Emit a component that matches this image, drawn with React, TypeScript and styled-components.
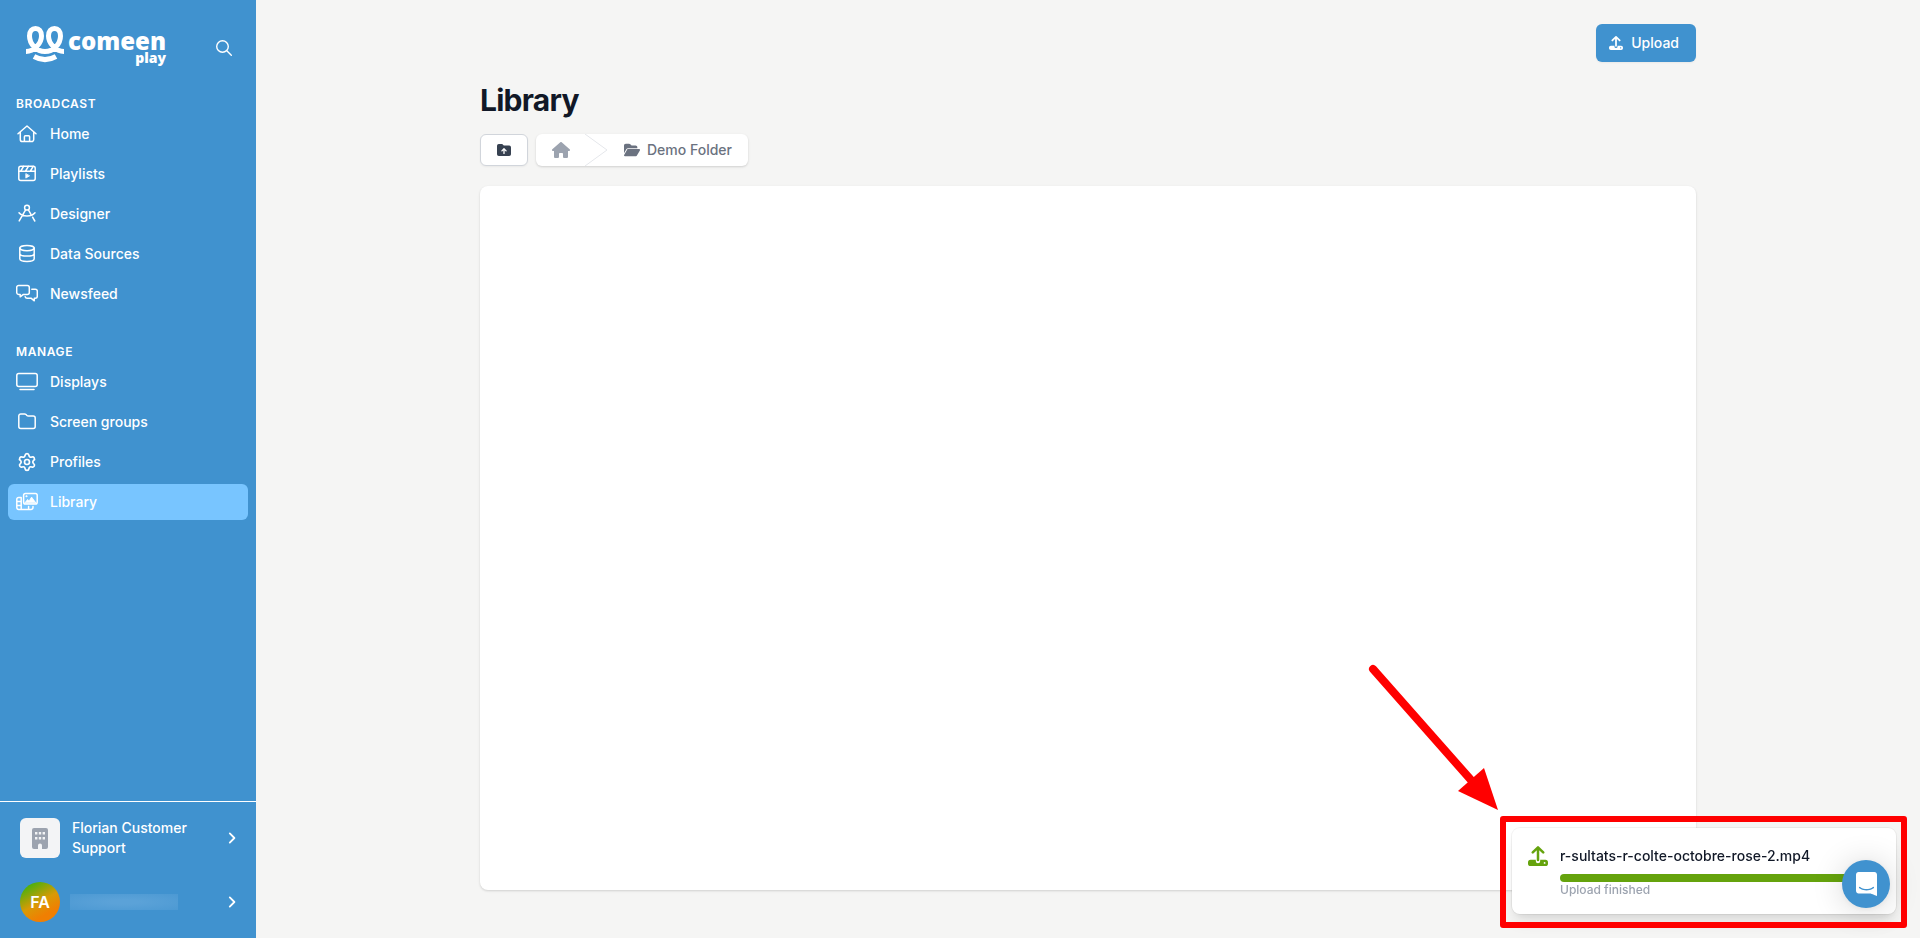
import type { ReactNode } from 'react';
import styled, { createGlobalStyle } from 'styled-components';
import { Settings } from 'lucide-react';
import { FaHouse, FaFolderOpen } from 'react-icons/fa6';

const BLUE = '#4092cf';

const GlobalStyle = createGlobalStyle`
  *, *::before, *::after { box-sizing: border-box; }
  body {
    margin: 0;
    background: #f5f5f4;
    color: #111827;
    font-family: Inter, "Liberation Sans", sans-serif;
    font-size: 14px;
    line-height: 20px;
  }
  button { font: inherit; cursor: pointer; }
  a { color: inherit; text-decoration: none; }
  svg { display: block; flex: none; }
`;

const Shell = styled.div`
  display: flex;
  min-height: 100vh;
`;

const Sidebar = styled.aside`
  display: flex;
  flex-direction: column;
  flex: 0 0 256px;
  background: ${BLUE};
  color: #fff;
`;

const Brand = styled.div`
  display: flex;
  align-items: flex-start;
  justify-content: space-between;
  height: 95px;
  padding: 26px 24px 0;
`;

const Logo = styled.a`
  display: flex;
  gap: 2px;
  font-family: "Open Sans", "Noto Sans", sans-serif;
  font-weight: 800;
`;

const LogoText = styled.span`
  display: flex;
  flex-direction: column;
  align-items: flex-end;
  padding-top: 4px;
`;

const LogoName = styled.span`
  font-size: 24px;
  line-height: 22px;
`;

const LogoSub = styled.span`
  font-size: 14px;
  line-height: 12px;
`;

const IconButton = styled.button`
  padding: 14px 0 0;
  border: 0;
  background: none;
  color: inherit;
`;

const Section = styled.nav`
  margin-bottom: 31px;
`;

const SectionTitle = styled.h2`
  margin: 0 16px 3px;
  font-size: 12px;
  font-weight: 600;
  line-height: 18px;
  letter-spacing: 0.05em;
`;

const NavList = styled.ul`
  display: flex;
  flex-direction: column;
  gap: 4px;
  margin: 0;
  padding: 0 8px;
  list-style: none;
`;

const NavLink = styled.a<{ $active?: boolean }>`
  display: flex;
  align-items: center;
  gap: 12px;
  height: 36px;
  padding: 0 8px;
  border-radius: 6px;
  background: ${(p) => (p.$active ? '#78c5ff' : 'transparent')};
  font-weight: 500;
`;

const Accounts = styled.div`
  display: flex;
  flex-direction: column;
  gap: 24px;
  margin-top: auto;
  padding: 16px 18px 16px 20px;
  border-top: 1px solid #fff;
`;

const AccountButton = styled.button`
  display: flex;
  align-items: center;
  gap: 12px;
  padding: 0;
  border: 0;
  background: none;
  color: inherit;
  text-align: left;
  font-weight: 500;
`;

const AccountName = styled.span`
  flex: 1;
`;

const Avatar = styled.span<{ $round?: boolean }>`
  display: flex;
  align-items: center;
  justify-content: center;
  flex: none;
  width: 40px;
  height: 40px;
  border-radius: ${(p) => (p.$round ? '50%' : '6px')};
  background: ${(p) =>
    p.$round ? 'linear-gradient(150deg, #2fb50e 5%, #d99a06 50%, #f07f02 75%)' : '#f3f4f6'};
  color: ${(p) => (p.$round ? '#fff' : '#9ca3af')};
  font-size: 16px;
  font-weight: 600;
`;

const HiddenName = styled.span`
  width: 108px;
  height: 16px;
  margin: 0 auto 0 -2px;
  background: radial-gradient(ellipse, #5ba2d8 20%, #4c99d3 100%);
`;

const Main = styled.main`
  display: flex;
  flex: 1;
  min-width: 0;
`;

const Content = styled.div`
  display: flex;
  flex: 1;
  flex-direction: column;
  max-width: 1280px;
  margin: 0 auto;
  padding: 24px 32px 48px;
`;

const Actions = styled.div`
  display: flex;
  justify-content: flex-end;
`;

const UploadButton = styled.button`
  display: flex;
  align-items: center;
  gap: 8px;
  height: 38px;
  padding: 0 17px 0 13px;
  border: 0;
  border-radius: 6px;
  background: ${BLUE};
  box-shadow: 0 1px 2px rgba(0, 0, 0, 0.05);
  color: #fff;
  font-weight: 500;
`;

const Title = styled.h1`
  margin: 20px 0 16px;
  font-size: 30px;
  font-weight: 700;
  line-height: 36px;
  letter-spacing: -0.025em;
`;

const PathBar = styled.div`
  display: flex;
  gap: 8px;
`;

const ParentButton = styled.button`
  display: flex;
  align-items: center;
  justify-content: center;
  width: 48px;
  height: 32px;
  padding: 0;
  border: 1px solid #d1d5db;
  border-radius: 6px;
  background: #fff;
  box-shadow: 0 1px 2px rgba(0, 0, 0, 0.05);
  color: #374151;
`;

const Breadcrumb = styled.nav`
  display: flex;
  align-items: center;
  height: 32px;
  padding: 0 16px;
  border-radius: 6px;
  background: #fff;
  box-shadow: 0 1px 3px rgba(0, 0, 0, 0.1), 0 1px 2px rgba(0, 0, 0, 0.06);
`;

const Crumb = styled.a<{ $muted?: boolean }>`
  display: flex;
  align-items: center;
  gap: 7px;
  color: ${(p) => (p.$muted ? '#9ca3af' : '#6b7280')};
  font-weight: 500;
`;

const CrumbDivider = styled.svg`
  margin: 0 16px 0 14px;
`;

const Panel = styled.section`
  flex: 1;
  margin-top: 20px;
  border-radius: 8px;
  background: #fff;
  box-shadow: 0 1px 3px rgba(0, 0, 0, 0.1), 0 1px 2px rgba(0, 0, 0, 0.06);
`;

const Toast = styled.div`
  position: fixed;
  right: 24px;
  bottom: 24px;
  display: flex;
  gap: 12px;
  width: 384px;
  padding: 18px 16px 16px;
  border-radius: 8px;
  background: #fff;
  box-shadow: 0 0 0 1px rgba(0, 0, 0, 0.05), 0 10px 15px -3px rgba(0, 0, 0, 0.1),
    0 4px 6px -2px rgba(0, 0, 0, 0.05);
  color: #65a30d;
`;

const ToastBody = styled.div`
  flex: 1;
`;

const FileName = styled.p`
  margin: 0 0 8px;
  color: #111827;
  font-weight: 500;
`;

const Progress = styled.div`
  height: 8px;
  border-radius: 4px;
  background: #65a30d;
`;

const Status = styled.p`
  margin: 0;
  color: #9ca3af;
  font-size: 12px;
  font-weight: 500;
  line-height: 16px;
`;

const ChatButton = styled.button`
  position: fixed;
  right: 30px;
  bottom: 30px;
  display: flex;
  align-items: center;
  justify-content: center;
  width: 48px;
  height: 48px;
  padding: 0;
  border: 0;
  border-radius: 50%;
  background: ${BLUE};
  box-shadow: 0 1px 6px rgba(0, 0, 0, 0.06), 0 2px 32px rgba(0, 0, 0, 0.16);
  color: #fff;
`;

const Highlight = styled.div`
  position: fixed;
  right: 13px;
  bottom: 10px;
  width: 407px;
  height: 112px;
  border: 6px solid #f00;
  border-radius: 3px;
  pointer-events: none;
`;

const Pointer = styled.svg`
  position: fixed;
  right: 420px;
  bottom: 128px;
  pointer-events: none;
`;

const GearBox = styled.span`
  display: flex;
  justify-content: center;
  width: 22px;
`;

function NavIcon({ children }: { children: ReactNode }) {
  return (
    <svg width="22" height="20" viewBox="0 0 22 20" fill="none" stroke="currentColor"
      strokeWidth="1.5" strokeLinecap="round" strokeLinejoin="round" aria-hidden="true">
      {children}
    </svg>
  );
}

const HomeIcon = (
  <NavIcon>
    <path d="M2 9.7 11 2l9 7.7M4.3 8.2v7.3a2.1 2.1 0 0 0 2.1 2.1h9.2a2.1 2.1 0 0 0 2.1-2.1V8.2M8.4 17.4v-4.6a1 1 0 0 1 1-1h3.2a1 1 0 0 1 1 1v4.6" />
  </NavIcon>
);

const PlaylistIcon = (
  <NavIcon>
    <rect x="2.8" y="2.2" width="16.4" height="14.4" rx="2" />
    <path d="M3 7.2h16M7.6 2.4 4.8 7M12.4 2.4 9.6 7M17.2 2.4 14.4 7" />
    <path d="M9.8 9.9v4.2l3.5-2.1z" fill="currentColor" strokeWidth="0.8" />
  </NavIcon>
);

const DesignerIcon = (
  <NavIcon>
    <circle cx="11" cy="3.7" r="2.4" />
    <path d="m9.6 5.9-6.4 11M12.4 5.9l2.4 4.2M16.6 13.2l2.2 3.8M3 8.8c3.6 4.4 12.4 4.4 16 0" />
  </NavIcon>
);

const DatabaseIcon = (
  <NavIcon>
    <ellipse cx="11" cy="4.1" rx="7.2" ry="2.7" />
    <path d="M3.8 4.1v10.7c0 1.5 3.2 2.7 7.2 2.7s7.2-1.2 7.2-2.7V4.1M3.8 9.4c0 1.5 3.2 2.7 7.2 2.7s7.2-1.2 7.2-2.7" />
  </NavIcon>
);

const NewsIcon = (
  <NavIcon>
    <path d="M2.7 1.4h8.6a2 2 0 0 1 2 2v5a2 2 0 0 1-2 2H7.4l-3.2 2.4v-2.4H2.7a2 2 0 0 1-2-2v-5a2 2 0 0 1 2-2z" />
    <path d="M15.8 5.2h3.5a2 2 0 0 1 2 2v5a2 2 0 0 1-2 2h-1v2.6l-3.3-2.6h-3.8a2 2 0 0 1-2-1.4" />
  </NavIcon>
);

const DisplayIcon = (
  <NavIcon>
    <rect x="0.8" y="1.4" width="20.4" height="13" rx="2" />
    <path d="M4 17.6h14" />
  </NavIcon>
);

const FolderIcon = (
  <NavIcon>
    <path d="M4.8 2h3.8a2 2 0 0 1 1.4.6l.9.9a2 2 0 0 0 1.4.6h4.9a2 2 0 0 1 2 2v8.5a2 2 0 0 1-2 2H4.8a2 2 0 0 1-2-2V4a2 2 0 0 1 2-2z" />
  </NavIcon>
);

const GearIcon = (
  <GearBox>
    <Settings size={20} strokeWidth={2} aria-hidden="true" />
  </GearBox>
);

const LibraryIcon = (
  <NavIcon>
    <rect x="7.6" y="1.4" width="13.6" height="10.6" rx="1.8" />
    <path d="m9 10.8 2.6-3.4 1.5 1.6 2.5-3.9 4.2 5.7z" fill="currentColor" strokeWidth="0.8" />
    <circle cx="10.4" cy="4.2" r="0.7" fill="currentColor" strokeWidth="0.6" />
    <path d="M5.2 5.4H2.6A1.8 1.8 0 0 0 .8 7.2v8.4a1.8 1.8 0 0 0 1.8 1.8h12.6a1.8 1.8 0 0 0 1.8-1.8v-1.2M5.2 5.6v11.6M1 9.4h4M1 13.4h4M12.6 14.4v2.8" />
  </NavIcon>
);

function Chevron() {
  return (
    <svg width="12" height="12" viewBox="0 0 12 12" fill="none" stroke="currentColor"
      strokeWidth="1.8" strokeLinecap="round" strokeLinejoin="round" aria-hidden="true">
      <path d="m3.8 1.4 4.6 4.6-4.6 4.6" />
    </svg>
  );
}

function UploadIcon({ size }: { size: number }) {
  return (
    <svg width={size} height={size} viewBox="0 0 20 20" aria-hidden="true">
      <path d="M10 14V2.2M4.8 6.4 10 1.4l5.2 5" fill="none" stroke="currentColor"
        strokeWidth="2.5" strokeLinecap="round" strokeLinejoin="round" />
      <path fillRule="evenodd" fill="currentColor"
        d="M2.6 13.8h5.2V15a2.2 2.2 0 0 0 4.4 0v-1.2h5.2a2.6 2.6 0 0 1 2.6 2.6v1a2.6 2.6 0 0 1-2.6 2.6H2.6A2.6 2.6 0 0 1 0 17.4v-1a2.6 2.6 0 0 1 2.6-2.6zM16.6 16a.9.9 0 1 0 0 1.8.9.9 0 0 0 0-1.8z" />
    </svg>
  );
}

type Item = { label: string; icon: ReactNode; active?: boolean };

const broadcast: Item[] = [
  { label: 'Home', icon: HomeIcon },
  { label: 'Playlists', icon: PlaylistIcon },
  { label: 'Designer', icon: DesignerIcon },
  { label: 'Data Sources', icon: DatabaseIcon },
  { label: 'Newsfeed', icon: NewsIcon },
];

const manage: Item[] = [
  { label: 'Displays', icon: DisplayIcon },
  { label: 'Screen groups', icon: FolderIcon },
  { label: 'Profiles', icon: GearIcon },
  { label: 'Library', icon: LibraryIcon, active: true },
];

function NavSection({ title, items }: { title: string; items: Item[] }) {
  return (
    <Section aria-label={title}>
      <SectionTitle>{title}</SectionTitle>
      <NavList>
        {items.map((item) => (
          <li key={item.label}>
            <NavLink href="#" $active={item.active} aria-current={item.active ? 'page' : undefined}>
              {item.icon}
              {item.label}
            </NavLink>
          </li>
        ))}
      </NavList>
    </Section>
  );
}

export default function App() {
  return (
    <>
      <GlobalStyle />
      <Shell>
        <Sidebar>
          <Brand>
            <Logo href="#">
              <svg width="42" height="38" viewBox="0 0 42 38" fill="none" stroke="#fff" strokeWidth="5" aria-hidden="true">
                <path d="M2 25.500c8 0 15.500-8 15.500-15.500 0-5-2.500-7.500-6-7.500S5.500 5 5.500 10c0 8 7 15.500 15.500 15.500S36.500 18 36.500 10c0-5-2.500-7.500-6-7.500s-6 2.500-6 7.500c0 7.500 7.500 15.500 15.500 15.500" />
                <path d="M10 30.500c7 4 15 4 22 0" />
              </svg>
              <LogoText>
                <LogoName>comeen</LogoName>
                <LogoSub>play</LogoSub>
              </LogoText>
            </Logo>
            <IconButton type="button" aria-label="Search">
              <svg width="16" height="16" viewBox="0 0 16 16" fill="none" stroke="currentColor" strokeWidth="1.4" strokeLinecap="round">
                <circle cx="6.5" cy="6.5" r="5.8" />
                <path d="m10.8 10.8 4.5 4.5" />
              </svg>
            </IconButton>
          </Brand>
          <NavSection title="BROADCAST" items={broadcast} />
          <NavSection title="MANAGE" items={manage} />
          <Accounts>
            <AccountButton type="button">
              <Avatar>
                <svg width="16" height="21" viewBox="0 0 16 21" aria-hidden="true">
                  <path fill="currentColor" d="M2 0h12a2 2 0 0 1 2 2v17a2 2 0 0 1-2 2h-4v-3.500a2 2 0 0 0-4 0V21H2a2 2 0 0 1-2-2V2a2 2 0 0 1 2-2z" />
                  <path fill="#f3f4f6" d="M3 4h2.400v2.400H3zM6.800 4h2.400v2.400H6.800zM10.600 4H13v2.400h-2.400zM3 9h2.400v2.400H3zM6.800 9h2.400v2.400H6.800zM10.600 9H13v2.400h-2.400z" />
                </svg>
              </Avatar>
              <AccountName>Florian Customer Support</AccountName>
              <Chevron />
            </AccountButton>
            <AccountButton type="button" aria-label="Account">
              <Avatar $round>FA</Avatar>
              <HiddenName />
              <Chevron />
            </AccountButton>
          </Accounts>
        </Sidebar>
        <Main>
          <Content>
            <Actions>
              <UploadButton type="button">
                <UploadIcon size={14} />
                Upload
              </UploadButton>
            </Actions>
            <Title>Library</Title>
            <PathBar>
              <ParentButton type="button" aria-label="Parent folder">
                <svg width="14" height="12" viewBox="0 0 14 12" aria-hidden="true">
                  <path fill="currentColor" d="M1.800 0h3.400l1.600 1.600h5.400A1.800 1.800 0 0 1 14 3.400v6.800a1.800 1.800 0 0 1-1.800 1.800H1.800A1.800 1.800 0 0 1 0 10.200V1.800A1.800 1.800 0 0 1 1.800 0z" />
                  <path d="M7 9.400V5M4.900 6.900 7 4.800l2.100 2.100" fill="none" stroke="#fff" strokeWidth="1.3" strokeLinecap="round" strokeLinejoin="round" />
                </svg>
              </ParentButton>
              <Breadcrumb aria-label="Breadcrumb">
                <Crumb href="#" $muted aria-label="Root folder">
                  <FaHouse size={18} />
                </Crumb>
                <CrumbDivider width="24" height="32" viewBox="0 0 24 32" fill="none" stroke="#e5e7eb" aria-hidden="true">
                  <path d="m1 0 22 16L1 32" />
                </CrumbDivider>
                <Crumb href="#">
                  <FaFolderOpen size={16} />
                  Demo Folder
                </Crumb>
              </Breadcrumb>
            </PathBar>
            <Panel aria-label="Files" />
          </Content>
        </Main>
      </Shell>
      <Toast role="status">
        <UploadIcon size={20} />
        <ToastBody>
          <FileName>r-sultats-r-colte-octobre-rose-2.mp4</FileName>
          <Progress role="progressbar" aria-label="Upload progress" aria-valuenow={100} />
          <Status>Upload finished</Status>
        </ToastBody>
      </Toast>
      <ChatButton type="button" aria-label="Open chat">
        <svg width="21" height="24" viewBox="0 0 28 32" aria-hidden="true">
          <path fill="currentColor" d="M28 32s-4.714-1.855-8.527-3.340H3.437C1.540 28.660 0 27.026 0 25.013V3.644C0 1.633 1.540 0 3.437 0h21.125c1.898 0 3.437 1.632 3.437 3.645v18.404H28V32zm-4.139-11.982a.88.88 0 0 0-1.292-.105c-.03.026-3.015 2.681-8.570 2.681-5.486 0-8.517-2.636-8.571-2.684a.88.88 0 0 0-1.290.107 1.010 1.010 0 0 0-.219.708.992.992 0 0 0 .318.664c.142.128 3.537 3.150 9.762 3.150 6.226 0 9.621-3.022 9.763-3.150a.992.992 0 0 0 .317-.664 1.010 1.010 0 0 0-.218-.707z" />
        </svg>
      </ChatButton>
      <Highlight />
      <Pointer width="132" height="148" viewBox="0 0 132 148" aria-hidden="true">
        <path d="m5 7 98 111" stroke="#f00" strokeWidth="8" strokeLinecap="round" />
        <path d="m116 106 14 42-40-19z" fill="#f00" />
      </Pointer>
    </>
  );
}
